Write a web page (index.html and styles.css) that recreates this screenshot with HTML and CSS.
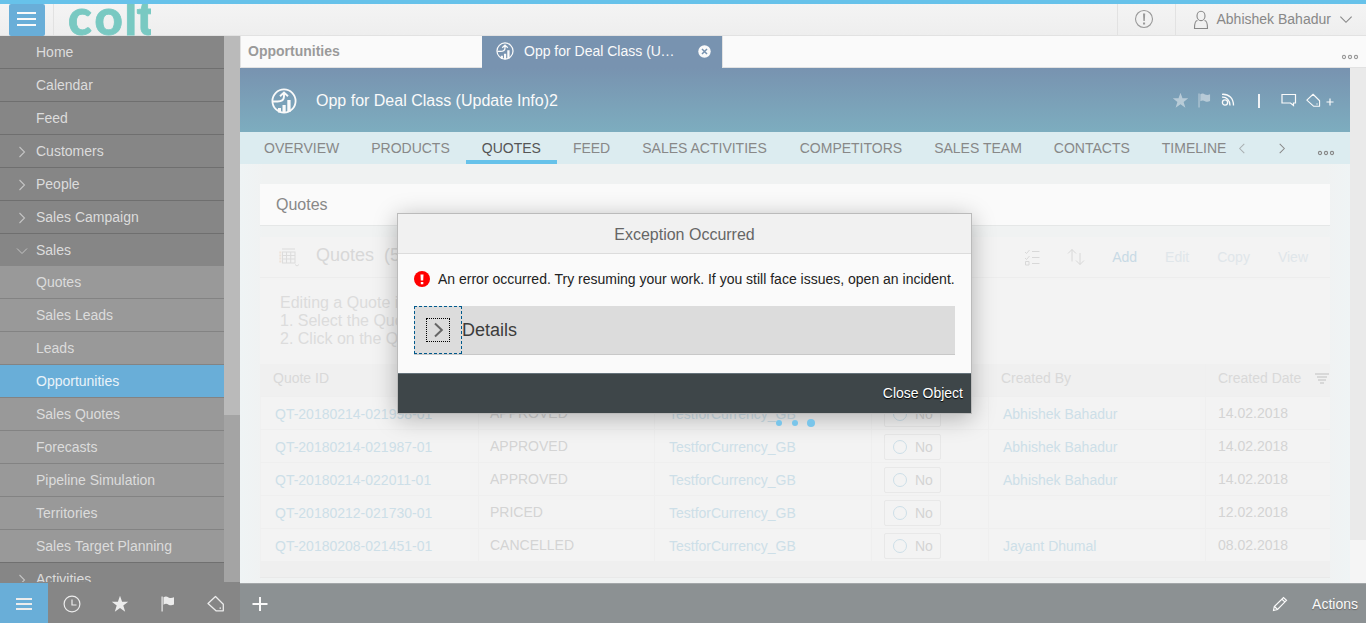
FILE: index.html
```html
<!DOCTYPE html>
<html lang="en">
<head>
<meta charset="utf-8">
<title>Opportunities</title>
<link rel="stylesheet" href="styles.css">
</head>
<body>
<svg class="defs" aria-hidden="true">
  <symbol id="growth" viewBox="0 0 26 26">
    <circle cx="13" cy="13" r="11.6" fill="none" stroke="currentColor" stroke-width="1.8"/>
    <path d="M2 13.500h4.500c4 0 6.500-2 6.500-5V5M9 8.300l4-3.800 4 3.800" fill="none" stroke="currentColor" stroke-width="1.900"/>
    <path d="M7 20h3v4.500H7zM11.500 17h3.200v8h-3.200zM16.300 12h3.300v12h-3.300z" fill="currentColor"/>
  </symbol>
  <symbol id="star" viewBox="0 0 18 18"><path d="M9 .8l2.100 5.900h6.100l-4.900 3.800 1.900 6.200L9 13l-5.200 3.700 1.900-6.200L.8 6.700h6.100z" fill="currentColor"/></symbol>
  <symbol id="flag" viewBox="0 0 14 16"><path d="M.5 .5h1.200v15H.500zM2.500 1.200c2-1 3.500-.8 5 .3 2 .8 3.500.7 5.500-.3v7.300c-2 1-3.700 1-5.500.2-1.500-1-3-1.200-5 0z" fill="currentColor"/></symbol>
  <symbol id="tag" viewBox="0 0 18 18"><path d="M1 8.500L8.500 1.500l7.800 7.800v6.500H9zM12.500 13.200h1.500" fill="none" stroke="currentColor" stroke-width="1.300" stroke-linejoin="round"/></symbol>
  <symbol id="right" viewBox="0 0 8 12"><path d="M1.500 1l5 5-5 5" fill="none" stroke="currentColor" stroke-width="1.100"/></symbol>
  <symbol id="left" viewBox="0 0 8 12"><path d="M6.500 1l-5 5 5 5" fill="none" stroke="currentColor" stroke-width="1.100"/></symbol>
  <symbol id="down" viewBox="0 0 12 8"><path d="M1 1.500l5 5 5-5" fill="none" stroke="currentColor" stroke-width="1"/></symbol>
  <symbol id="dots" viewBox="0 0 18 6"><g fill="none" stroke="currentColor" stroke-width="1.100"><circle cx="3" cy="3" r="1.600"/><circle cx="9" cy="3" r="1.600"/><circle cx="15" cy="3" r="1.600"/></g></symbol>
</svg>

<header class="shell">
  <button class="menu"><i></i><i></i><i></i></button>
  <div class="brand">
    <svg width="87" height="32" viewBox="0 0 87 32"><text class="logo" x="4 30.500 60.500 72.500" y="31">colt</text></svg>
  </div>
  <div class="alert"><svg width="20" height="20" viewBox="0 0 20 20"><circle cx="10" cy="10" r="8.500" fill="none" stroke="currentColor" stroke-width="1.100"/><path d="M9 4.500h2.200l-.4 7.500H9.400zM9 13.500h2.100v2H9z" fill="currentColor"/></svg></div>
  <div class="user">
    <svg width="16" height="20" viewBox="0 0 16 20"><path d="M4.500 10.500C2.500 10.500 1.500 12 1.500 18.500h13c0-6.500-1-8-3-8" fill="none" stroke="currentColor" stroke-width="1.100"/><ellipse cx="8" cy="5.900" rx="4" ry="4.700" fill="none" stroke="currentColor" stroke-width="1.100"/></svg>
    <span>Abhishek Bahadur</span>
    <svg width="14" height="9"><use href="#down"/></svg>
  </div>
</header>

<div class="body">
  <aside class="side">
    <nav class="list">
      <a>Home</a><a>Calendar</a><a>Feed</a>
      <a><svg><use href="#right"/></svg>Customers</a>
      <a><svg><use href="#right"/></svg>People</a>
      <a><svg><use href="#right"/></svg>Sales Campaign</a>
      <a class="open"><svg><use href="#down"/></svg>Sales</a>
      <a class="sub">Quotes</a><a class="sub">Sales Leads</a><a class="sub">Leads</a>
      <a class="sub on">Opportunities</a><a class="sub">Sales Quotes</a><a class="sub">Forecasts</a>
      <a class="sub">Pipeline Simulation</a><a class="sub">Territories</a><a class="sub last">Sales Target Planning</a>
      <a><svg><use href="#right"/></svg>Activities</a>
    </nav>
    <div class="track"><div class="thumb"></div></div>
  </aside>

  <main class="main">
    <div class="tabs">
      <div class="tab">Opportunities</div>
      <div class="tab active"><svg class="g" width="18" height="18"><use href="#growth"/></svg><span>Opp for Deal Class (U<i>...</i></span>
        <svg class="x" width="13" height="13" viewBox="0 0 13 13"><circle cx="6.500" cy="6.500" r="6.200" fill="#fafafa"/><path d="M4 4l5 5M9 4l-5 5" stroke="#7893b0" stroke-width="1.500"/></svg></div>
      <div class="rest"><svg width="18" height="6"><use href="#dots"/></svg></div>
    </div>
    <div class="pane">
      <div class="object">
        <div class="title">
          <svg width="26" height="26"><use href="#growth"/></svg>
          <h1>Opp for Deal Class (Update Info)2</h1>
          <div class="tools">
            <svg class="dim" width="17" height="17"><use href="#star"/></svg>
            <svg class="dim flag" width="13" height="15"><use href="#flag"/></svg>
            <svg class="rss" width="14" height="14" viewBox="0 0 14 14"><g fill="none" stroke="currentColor" stroke-width="1.300"><circle cx="4" cy="9.500" r="2.600"/><path d="M1 4.200c4.500-.5 8 3 8 8.300M1 1.300c7-.5 11.500 4 11.500 11.200"/></g></svg>
            <i class="bar"></i>
            <svg class="chat" width="16" height="14" viewBox="0 0 16 14"><path d="M1 1.500h13.500v8.500h-2v2.500L9.500 10H1z" fill="none" stroke="currentColor" stroke-width="1.200"/></svg>
            <svg class="tg" width="15" height="15"><use href="#tag"/></svg>
            <svg class="pl" width="8" height="8" viewBox="0 0 8 8"><path d="M4 .5v7M.5 4h7" stroke="currentColor" stroke-width="1.200"/></svg>
          </div>
        </div>
        <nav class="facets">
          <a>OVERVIEW</a><a>PRODUCTS</a><a class="on">QUOTES</a><a>FEED</a><a>SALES ACTIVITIES</a><a class="wide">COMPETITORS</a><a>SALES TEAM</a><a>CONTACTS</a><a class="tl">TIMELINE</a>
          <svg class="prev" width="8" height="11"><use href="#left"/></svg>
          <svg class="next" width="8" height="11"><use href="#right"/></svg>
          <svg class="more" width="18" height="6"><use href="#dots"/></svg>
        </nav>
        <section class="content">
          <h2>Quotes</h2>
          <div class="bar-row">
            <svg class="grid" width="20" height="19" viewBox="0 0 20 19"><path d="M3 1h13M3.500 4h12.500v11H3.500zM3.500 7.500H16M3.500 11H16M7.500 4v11M11.700 4v11" fill="none" stroke="#dcdcdc" stroke-width="1.100"/><path d="M1.300 3.500v12" stroke="#eee2d8" stroke-width="2" stroke-dasharray="2 1"/><path d="M16 16.500l2 1.500 2-1.500" fill="none" stroke="#ddd"/></svg>
            <h3>Quotes&nbsp; (5)</h3>
            <svg class="check" width="16" height="17" viewBox="0 0 16 17"><path d="M1 3l1.500 1.500L5.500 1M1 9l1.500 1.500L5.500 7M1.500 12.500h3.500V16H1.500zM8 2.500h7.500M8 8.500h7.500M8 14.500h7.500" fill="none" stroke="currentColor"/></svg>
            <svg class="sort" width="18" height="18" viewBox="0 0 18 18"><path d="M5 13.500V1.500M1 5.500l4-4 4 4M13 5v11.500M9 12.500l4 4 4-4" fill="none" stroke="currentColor"/></svg>
            <b class="add">Add</b><b>Edit</b><b>Copy</b><b>View</b>
          </div>
          <p class="hint">Editing a Quote is possible as follows:<br>1. Select the Quote<br>2. Click on the Quote ID</p>
          <div class="table">
            <div class="row head"><span>Quote ID</span><span>Status</span><span>Account</span><span></span><span>Created By</span><span>Created Date<svg width="14" height="11" viewBox="0 0 14 11"><path d="M0 1h14M2 4h10M3 7h8M5 10h4" stroke="#cfcfcf" stroke-width="1.400"/></svg></span></div>
            <div class="row"><a>QT-20180214-021998-01</a><span>APPROVED</span><a>TestforCurrency_GB</a><span><em><i></i>No</em></span><a>Abhishek Bahadur</a><span>14.02.2018</span></div>
            <div class="row"><a>QT-20180214-021987-01</a><span>APPROVED</span><a>TestforCurrency_GB</a><span><em><i></i>No</em></span><a>Abhishek Bahadur</a><span>14.02.2018</span></div>
            <div class="row"><a>QT-20180214-022011-01</a><span>APPROVED</span><a>TestforCurrency_GB</a><span><em><i></i>No</em></span><a>Abhishek Bahadur</a><span>14.02.2018</span></div>
            <div class="row"><a>QT-20180212-021730-01</a><span>PRICED</span><a>TestforCurrency_GB</a><span><em><i></i>No</em></span><a></a><span>12.02.2018</span></div>
            <div class="row"><a>QT-20180208-021451-01</a><span>CANCELLED</span><a>TestforCurrency_GB</a><span><em><i></i>No</em></span><a>Jayant Dhumal</a><span>08.02.2018</span></div>
            <div class="hscroll"></div>
          </div>
        </section>
      </div>
      <div class="vtrack"><div class="vthumb"></div></div>
    </div>
  </main>
</div>

<footer class="foot">
  <div class="cell on"><svg width="18" height="14" viewBox="0 0 18 14"><path d="M1 2h16M1 7h16M1 12h16" stroke="currentColor" stroke-width="1.800"/></svg></div>
  <div class="cell"><svg width="18" height="18" viewBox="0 0 18 18"><circle cx="9" cy="9" r="7.900" fill="none" stroke="currentColor" stroke-width="1.200"/><path d="M9 4.500V10h4.500" fill="none" stroke="currentColor" stroke-width="1.200"/></svg></div>
  <div class="cell"><svg width="18" height="18"><use href="#star"/></svg></div>
  <div class="cell"><svg width="14" height="16"><use href="#flag"/></svg></div>
  <div class="cell"><svg width="18" height="18"><use href="#tag"/></svg></div>
  <div class="actions">
    <svg class="plus" width="16" height="16" viewBox="0 0 16 16"><path d="M8 1v14M.5 8h15" stroke="currentColor" stroke-width="2"/></svg>
    <svg class="pen" width="16" height="16" viewBox="0 0 16 16"><path d="M1.500 14.500l.8-4L11.500 1.500l3 2.800L5.500 13.500zM10 3.200l2.800 2.700M2.500 10.500l3 3" fill="none" stroke="currentColor" stroke-width="1.200"/></svg>
    <span>Actions</span>
  </div>
</footer>

<div class="dialog" role="dialog">
  <div class="d-title">Exception Occurred</div>
  <div class="d-body">
    <div class="msg"><svg width="16" height="16" viewBox="0 0 16 16"><circle cx="8" cy="8" r="8" fill="#f00"/><path d="M6.500 3.500h3L9.200 9.500H6.800zM6.800 11h2.500v2.300H6.800z" fill="#fff"/></svg><span>An error occurred. Try resuming your work. If you still face issues, open an incident.</span></div>
    <div class="details"><div class="toggle"><div><svg width="12" height="16" viewBox="0 0 12 16"><path d="M2 1.500L8.800 8 2 14.500" fill="none" stroke="#666" stroke-width="2"/></svg></div></div>Details</div>
  </div>
  <div class="d-foot">Close Object</div>
</div>
<div class="busy"><i></i><i></i><i></i></div>
</body>
</html>
```
FILE: styles.css
```css
* { box-sizing: border-box; }
body { margin: 0; width: 1366px; height: 623px; overflow: hidden; display: flex; flex-direction: column; font: 14px "Liberation Sans", Arial, sans-serif; color: #888; background: #fafafa; position: relative; }
svg { flex: none; display: block; }
.defs { position: absolute; width: 0; height: 0; }
h1, h2, h3, p { margin: 0; font-weight: 400; }

/* Shell header */
.shell { height: 36px; flex: none; display: flex; border-top: 4px solid #67c2ea; border-bottom: 1px solid #e2e2e2; background: linear-gradient(#f4f4f4, #eee); }
.menu { margin: 0 8px 0 9px; width: 36px; height: 32px; padding: 8px 8px; border: 0; border-radius: 2px; background: #69aed8; display: flex; flex-direction: column; gap: 4px; }
.menu i { height: 2px; width: 19px; background: #fafafa; }
.brand { border-left: 1px solid #e2e2e2; flex: 1; padding-left: 10px; }
.logo { font: 900 49px Lato, sans-serif; fill: #79c9c2; stroke: #79c9c2; stroke-width: .8px; }
.alert { width: 58px; border-left: 1px solid #e2e2e2; display: flex; justify-content: center; padding: 5px 5px 0 0; color: #999; }
.user { width: 191px; border-left: 1px solid #e2e2e2; display: flex; align-items: center; padding-left: 17px; color: #888; }
.user span { margin: -1px 8px 0 7.500px; }

.body { flex: 1; min-height: 0; display: flex; }

/* Navigation */
.side { width: 240px; display: flex; flex: none; border-bottom: 1px solid #868686; }
.list { width: 224px; overflow: hidden; background: #868686; }
.list a { display: flex; align-items: center; height: 33px; padding: 0 0 0 36px; border-bottom: 1px solid #6f6f6f; color: #dcdcdc; }
.list a svg { width: 8px; height: 12px; margin: 1px 10px 0 -18px; color: #c4c4c4; }
.list a.open { height: 32px; border: 0; }
.list a.open svg { width: 12px; height: 8px; margin: 1px 8px 0 -20px; }
.list .sub { background: #999; border-color: #838383; }
.list .last { border-color: #707070; height: 33px; }
.list .on { background: #69aed8; color: #eaf3f9; }
.track { width: 16px; background: #a4a4a4; }
.thumb { height: 379px; background: #bababa; }

/* Workspace tabs */
.main { flex: 1; min-width: 0; display: flex; flex-direction: column; }
.tabs { height: 32px; display: flex; flex: none; }
.tab { width: 242px; padding: 7px 0 0 7px; border: solid #e2e2e2; border-width: 0 0 1px 1px; font-weight: 700; color: #9a9a9a; background: #fafafa; }
.tab.active { width: 240px; display: flex; border: 0; padding: 6px 11px 0 14px; background: #7893b0; color: #fafafa; font-weight: 400; }
.tab.active span { margin: 1px auto 0 10px; }
.tab.active i { font-style: normal; letter-spacing: .7px; }
.tab .x { margin-top: 3px; }
.rest { flex: 1; border-bottom: 1px solid #e2e2e2; border-left: 1px solid #e2e2e2; display: flex; justify-content: flex-end; padding: 18px 7px 0 0; color: #999; }

.pane { flex: 1; min-height: 0; display: flex; }
.object { width: 1110px; display: flex; flex-direction: column; overflow: hidden; }
.vtrack { width: 16px; background: #f5f5f5; }
.vthumb { height: 472px; background: #eaeaea; }
.title { height: 64px; flex: none; display: flex; align-items: center; padding: 2px 16px 0 31px; background: linear-gradient(#7893b0, #7dadbf); color: #fafafa; }
.title h1 { font-size: 16px; margin-left: 19px; margin-right: auto; }
.tools { display: flex; align-items: center; margin-top: -2px; }
.dim { opacity: .48; }
.flag { margin-left: 9px; }
.rss { margin-left: 10px; }
.bar { width: 2px; height: 14px; background: #f0f3f6; margin: 2px 21px 0 23px; }
.tg { margin-left: 9px; }
.pl { margin: 3px 0 0 5px; }

.facets { height: 32px; flex: none; display: flex; background: #dcecf0; padding-left: 8px; }
.facets a { padding: 8px 16px 0; height: 32px; white-space: nowrap; }
.facets .on { color: #555; border-bottom: 4px solid #67c2ea; }
.facets .wide { padding-left: 17px; }
.facets .tl { padding-right: 0; }
.facets svg { margin-top: 11px; }
.facets .prev { margin-left: 12px; opacity: .6; }
.facets .next { margin-left: 32px; }
.facets .more { margin: 18px 0 0 31px; }

/* Quotes list */
.content { flex: 1; padding: 20px 20px 0; background: linear-gradient(90deg, #eff4f5, #f0f2f2 24px, #f0f2f2 calc(100% - 24px), #eff4f5); }
.content h2 { height: 42px; border-bottom: 1px solid #e5e7e7; background: #fafafa; padding: 12px 16px; font-size: 16px; line-height: 18px; }
.bar-row { margin-top: 11px; height: 41px; background: #f3f3f3; border-bottom: 1px solid #ededed; display: flex; align-items: center; padding: 0 22px 0 19px; color: #d8d8d8; }
.bar-row h3 { font-size: 18px; margin: 0 auto 4px 17px; }
.sort { margin: 0 27px 0 27px; }
.bar-row b { font-weight: 400; color: #e0e6ea; margin-right: 28px; }
.bar-row .add { color: #c8dae5; }
.bar-row b:last-child { margin-right: 0; }
.hint { height: 86px; padding: 16px 20px; font-size: 16px; line-height: 18px; color: #dcdcdc; background: #f3f3f3; }
.table { background: #f3f3f3; }
.row { display: grid; grid-template-columns: 218px 176px 217px 117px 217px 125px; height: 33px; border-bottom: 1px solid #efefef; color: #d4d4d4; }
.row > * { border-left: 1px solid #efefef; padding: 8px 0 0 11px; white-space: nowrap; }
.row > :last-child { padding-left: 12px; }
.row > a { color: #cddfe8; padding: 9px 0 0 14px; }
.row > :first-child { border-left-color: #f0f0f0; }
.head { background: #f0f0f0; color: #d9d9d9; }
.head > span { padding-top: 6px; padding-left: 12px; display: flex; }
.head svg { margin: 3px 0 0 14px; }
.row em { display: flex; align-items: center; width: 57px; height: 26px; margin: -4px 0 0 1px; padding-left: 8px; font-style: normal; border: 1px solid #e8e8e8; border-radius: 2px; }
.row em i { width: 14px; height: 14px; border: 1px solid #cddfe8; border-radius: 50%; margin-right: 8px; }
.hscroll { height: 16px; background: #efefef; border-bottom: 1px solid #e9e9e9; }

/* Footer */
.foot { height: 40px; flex: none; display: flex; color: #ececec; background: #868686; }
.cell { width: 48px; display: flex; align-items: center; justify-content: center; padding-top: 2px; }
.cell.on { background: #69aed8; }
.actions { flex: 1; display: flex; align-items: center; background: #8c9193; border-top: 1px solid #a3a7a9; padding: 1px 8px 0 12px; color: #fafafa; text-shadow: 0 1px 1px #666; }
.pen { margin-left: auto; margin-right: 24px; }

/* Error dialog */
.dialog { position: absolute; left: 397px; top: 213px; width: 575px; height: 201px; border: 1px solid #bbb; background: #fafafa; box-shadow: 0 4px 22px rgba(0,0,0,.28); display: flex; flex-direction: column; }
.d-title { height: 40px; border-bottom: 1px solid #dcdcdc; background: #f1f1f1; color: #666; font-size: 16px; text-align: center; line-height: 41px; }
.d-body { flex: 1; padding: 17px 16px 0; }
.msg { display: flex; gap: 8px; color: #222; white-space: nowrap; }
.details { margin-top: 19px; height: 49px; border-bottom: 1px solid #c8c8c8; background: #dcdcdc; display: flex; align-items: center; font-size: 18px; color: #3c3c3c; }
.toggle { width: 48px; height: 48px; border: 1px dashed #00598c; display: grid; place-items: center; }
.toggle div { width: 24px; height: 24px; border: 1px dotted #000; display: grid; place-items: center; }
.toggle svg { margin-left: 2px; }
.d-foot { height: 40px; background: #3e4649; border-top: 1px solid #65727a; color: #fff; text-align: right; line-height: 38px; padding-right: 8px; text-shadow: 0 1px 1px #000; }
.busy { position: absolute; left: 776px; top: 419px; height: 8px; display: flex; align-items: center; gap: 10px; }
.busy i { width: 6px; height: 6px; border-radius: 50%; background: #79c5ea; }
.busy i:last-child { width: 8px; height: 8px; margin-left: -1px; }
```
